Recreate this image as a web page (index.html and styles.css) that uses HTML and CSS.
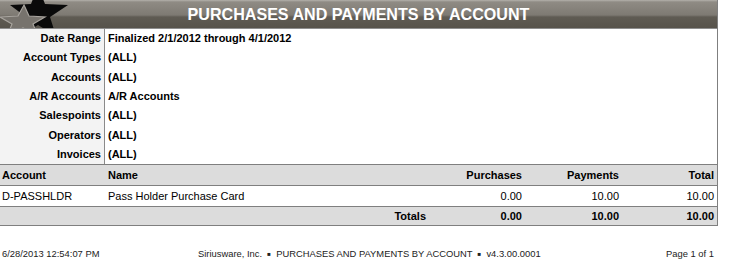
FILE: index.html
```html
<!DOCTYPE html>
<html>
<head>
<meta charset="utf-8">
<link rel="stylesheet" href="styles.css">
</head>
<body>
<div class="report">
  <div class="banner">
    <svg class="logo" width="80" height="28" viewBox="0 0 80 28">
      <polygon points="38,-14 45,4 68,5 50,17 56,36 38,25 20,36 26,17 10,5 31,4" fill="#0a0a0a"/>
      <polygon points="24,5 29,16 45,17 33,24 37,34 23,28 8,34 12,24 0,17 18,16" fill="#77736d" stroke="#a8a49e" stroke-width="1.2"/>
    </svg>
    <div class="title">PURCHASES AND PAYMENTS BY ACCOUNT</div>
  </div>
  <div class="params">
    <div class="lbl">Date Range</div><div class="val">Finalized 2/1/2012 through 4/1/2012</div>
    <div class="lbl">Account Types</div><div class="val">(ALL)</div>
    <div class="lbl">Accounts</div><div class="val">(ALL)</div>
    <div class="lbl">A/R Accounts</div><div class="val">A/R Accounts</div>
    <div class="lbl">Salespoints</div><div class="val">(ALL)</div>
    <div class="lbl">Operators</div><div class="val">(ALL)</div>
    <div class="lbl">Invoices</div><div class="val">(ALL)</div>
  </div>
  <div class="row head">
    <div class="c1">Account</div><div class="c2">Name</div><div class="c3">Purchases</div><div class="c4">Payments</div><div class="c5">Total</div>
  </div>
  <div class="row data">
    <div class="c1">D-PASSHLDR</div><div class="c2">Pass Holder Purchase Card</div><div class="c3">0.00</div><div class="c4">10.00</div><div class="c5">10.00</div>
  </div>
  <div class="row totals">
    <div class="c1"></div><div class="c2 tl">Totals</div><div class="c3">0.00</div><div class="c4">10.00</div><div class="c5">10.00</div>
  </div>
</div>
<div class="footer">
  <div class="f-left">6/28/2013 12:54:07 PM</div>
  <div class="f-mid">Siriusware, Inc. &nbsp;<span class="dot">&#9632;</span>&nbsp; PURCHASES AND PAYMENTS BY ACCOUNT &nbsp;<span class="dot">&#9632;</span>&nbsp; v4.3.00.0001</div>
  <div class="f-right">Page 1 of 1</div>
</div>
</body>
</html>
```
FILE: styles.css
```css
html, body { margin: 0; padding: 0; background: #fff; }
body { font-family: "Liberation Sans", Arial, sans-serif; font-size: 11px; color: #000; }
.report { width: 718px; box-sizing: border-box; border-right: 1px solid #7f7f7f; }
.banner {
  position: relative;
  height: 29px;
  box-sizing: border-box;
  border-bottom: 1px solid #8e8e8e;
  background: linear-gradient(to bottom, #b4b1ab 0px, #8f8b84 2px, #7e7a73 15px, #5f5b53 17px, #57534b 28px);
  display: flex; align-items: center; justify-content: center;
  overflow: hidden;
}
.logo { position: absolute; left: 0; top: 0; }
.title { color: #fff; font-weight: bold; font-size: 16.1px; margin-top: 1px; }
.params {
  display: grid; grid-template-columns: 105px 1fr;
  grid-auto-rows: 19.33px;
  border-bottom: 1px solid #7f7f7f;
  font-weight: bold;
}
.lbl { background: #f3f3f3; border-right: 1px solid #8a8a8a; text-align: right; padding-right: 3px; line-height: 19px; box-sizing: border-box; }
.val { padding-left: 3px; line-height: 19px; }
.row { display: grid; grid-template-columns: 106px 330px 88px 97px 95px; align-items: center; box-sizing: border-box; }
.row > div { padding: 0 2px; }
.c3, .c4, .c5 { text-align: right; }
.head { background: #dcdcdc; font-weight: bold; border-bottom: 1px solid #7f7f7f; height: 21px; }
.data { background: #fff; height: 20px; }
.totals { background: #dcdcdc; font-weight: bold; border-top: 1px solid #7f7f7f; border-bottom: 1px solid #7f7f7f; height: 20px; }
.tl { text-align: right; padding-right: 10px !important; }
.footer { display: grid; grid-template-columns: 196px 1fr auto; width: 712px; padding-left: 2px; margin-top: 22px; font-size: 9.4px; color: #222; }
.dot { font-size: 6px; vertical-align: 1px; }
```
